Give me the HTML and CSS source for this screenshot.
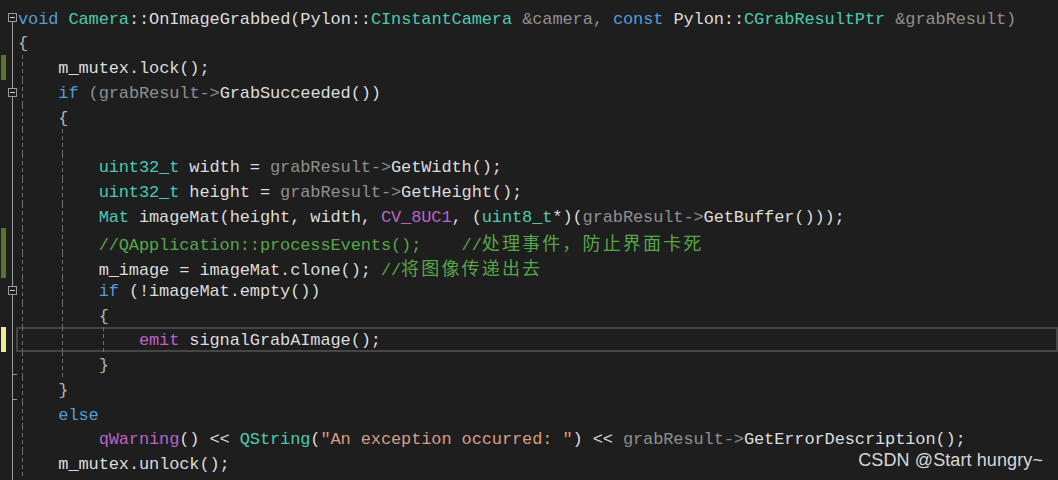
FILE: index.html
```html
<!DOCTYPE html>
<html lang="zh-CN">
<head>
    <meta charset="UTF-8">
    <meta name="viewport" content="width=device-width, initial-scale=1.0">
    <title>Camera::OnImageGrabbed</title>
    <link rel="stylesheet" href="styles.css">
</head>
<body>
    <div class="editor">
        <div class="line">
            <span class="gut"><span class="mark"></span><span class="fold top"><i class="box"></i></span></span>
            <span class="code"><span class="txt"><span class="kw">void</span> <span class="ty">Camera</span>::OnImageGrabbed(Pylon::<span class="ty">CInstantCamera</span> <span class="pa">&amp;camera,</span> <span class="kw">const</span> Pylon::<span class="ty">CGrabResultPtr</span> <span class="pa">&amp;grabResult)</span></span></span>
        </div>
        <div class="line">
            <span class="gut"><span class="mark"></span><span class="fold"></span></span>
            <span class="code"><span class="txt pu">{</span></span>
        </div>
        <div class="line">
            <span class="gut"><span class="mark add"></span><span class="fold"></span></span>
            <span class="code"><span class="ind g"></span><span class="txt">m_mutex.lock();</span></span>
        </div>
        <div class="line">
            <span class="gut"><span class="mark"></span><span class="fold"><i class="box"></i></span></span>
            <span class="code"><span class="ind g"></span><span class="txt"><span class="kw">if</span> <span class="pa">(grabResult-&gt;</span>GrabSucceeded())</span></span>
        </div>
        <div class="line">
            <span class="gut"><span class="mark"></span><span class="fold"></span></span>
            <span class="code"><span class="ind g"></span><span class="txt pu">{</span></span>
        </div>
        <div class="line">
            <span class="gut"><span class="mark"></span><span class="fold"></span></span>
            <span class="code"><span class="ind g"></span><span class="ind g"></span></span>
        </div>
        <div class="line">
            <span class="gut"><span class="mark"></span><span class="fold"></span></span>
            <span class="code"><span class="ind g"></span><span class="ind g"></span><span class="txt"><span class="ty">uint32_t</span> width = <span class="pa">grabResult-&gt;</span>GetWidth();</span></span>
        </div>
        <div class="line">
            <span class="gut"><span class="mark"></span><span class="fold"></span></span>
            <span class="code"><span class="ind g"></span><span class="ind g"></span><span class="txt"><span class="ty">uint32_t</span> height = <span class="pa">grabResult-&gt;</span>GetHeight();</span></span>
        </div>
        <div class="line">
            <span class="gut"><span class="mark"></span><span class="fold"></span></span>
            <span class="code"><span class="ind g"></span><span class="ind g"></span><span class="txt"><span class="ty">Mat</span> imageMat(height, width, <span class="mc">CV_8UC1</span>, (<span class="ty">uint8_t</span>*)(<span class="pa">grabResult-&gt;</span>GetBuffer()));</span></span>
        </div>
        <div class="line">
            <span class="gut"><span class="mark add"></span><span class="fold"></span></span>
            <span class="code"><span class="ind g"></span><span class="ind g"></span><span class="txt cm">//QApplication::processEvents();    //<span class="cjk">处理事件，防止界面卡死</span></span></span>
        </div>
        <div class="line">
            <span class="gut"><span class="mark add"></span><span class="fold"></span></span>
            <span class="code"><span class="ind g"></span><span class="ind g"></span><span class="txt">m_image = imageMat.clone(); <span class="cm">//<span class="cjk">将图像传递出去</span></span></span></span>
        </div>
        <div class="line">
            <span class="gut"><span class="mark"></span><span class="fold"><i class="box"></i></span></span>
            <span class="code"><span class="ind g"></span><span class="ind g"></span><span class="txt"><span class="kw">if</span> (!imageMat.empty())</span></span>
        </div>
        <div class="line">
            <span class="gut"><span class="mark"></span><span class="fold"></span></span>
            <span class="code"><span class="ind g"></span><span class="ind g"></span><span class="txt pu">{</span></span>
        </div>
        <div class="line">
            <span class="gut"><span class="mark edit"></span><span class="fold"></span></span>
            <span class="code cur"><span class="ind g"></span><span class="ind g"></span><span class="ind g"></span><span class="txt"><span class="mc">emit</span> signalGrabAImage();</span></span>
        </div>
        <div class="line">
            <span class="gut"><span class="mark"></span><span class="fold end"><i class="tick"></i></span></span>
            <span class="code"><span class="ind g"></span><span class="ind g"></span><span class="txt pu">}</span></span>
        </div>
        <div class="line">
            <span class="gut"><span class="mark"></span><span class="fold end"><i class="tick"></i></span></span>
            <span class="code"><span class="ind g"></span><span class="txt pu">}</span></span>
        </div>
        <div class="line">
            <span class="gut"><span class="mark"></span><span class="fold"></span></span>
            <span class="code"><span class="ind g"></span><span class="txt kw">else</span></span>
        </div>
        <div class="line">
            <span class="gut"><span class="mark"></span><span class="fold"></span></span>
            <span class="code"><span class="ind g"></span><span class="ind"></span><span class="txt"><span class="mc">qWarning</span>() &lt;&lt; <span class="ty">QString</span>(<span class="st">"An exception occurred: "</span>) &lt;&lt; <span class="pa">grabResult-&gt;</span>GetErrorDescription();</span></span>
        </div>
        <div class="line">
            <span class="gut"><span class="mark"></span><span class="fold"></span></span>
            <span class="code"><span class="ind g"></span><span class="txt">m_mutex.unlock();</span></span>
        </div>
        <div class="line">
            <span class="gut"><span class="mark"></span><span class="fold"></span></span>
            <span class="code"><span class="txt pu">}</span></span>
        </div>
    </div>

    <div class="watermark">CSDN @Start hungry~</div>
</body>
</html>
```

FILE: styles.css
```css
:root {
    --bg: #1e1e1e;
    --text: #dcdcdc;
    --keyword: #569cd6;
    --type: #4ec9b0;
    --param: #8f8f8f;
    --punct: #b4b4b4;
    --macro: #bd63c5;
    --string: #d69d85;
    --comment: #57a64a;
    --outline: #9b9b9b;
    --guide: #6e6e6e;
}

body {
    margin: 0;
    background-color: var(--bg);
    height: 480px;
    overflow: hidden;
    position: relative;
}

.editor {
    padding-top: 5.6px;
    font-family: "Liberation Mono", monospace;
    font-size: 17px;
    letter-spacing: -0.12px;
    color: var(--text);
}

.line {
    display: flex;
    height: 24.75px;
    line-height: 24.75px;
}

/* marge : marqueurs de modification + contour */
.gut {
    flex: none;
    width: 17px;
    display: flex;
}

.mark {
    width: 5px;
    margin-left: 1px;
}

.mark.add {
    background-color: #57752f;
}

.mark.edit {
    background-color: #eded8f;
}

.fold {
    width: 9px;
    margin-left: 2px;
    display: flex;
    align-items: center;
    background: linear-gradient(var(--outline), var(--outline)) no-repeat 4px 0 / 1px 100%;
}

.fold.top {
    background-position: 4px 100%;
    background-size: 1px 50%;
}

.fold.end {
    align-items: flex-end;
}

.box {
    box-sizing: border-box;
    width: 9px;
    height: 9px;
    border: 1px solid var(--outline);
    background-color: var(--bg);
    display: flex;
    align-items: center;
    justify-content: center;
}

.box::after {
    content: "";
    width: 5px;
    height: 1px;
    background-color: #d0d0d0;
}

.tick {
    width: 4px;
    height: 1px;
    margin-left: 5px;
    margin-bottom: 2px;
    background-color: var(--outline);
}

/* code */
.code {
    flex: 1;
    display: flex;
    padding-left: 1px;
    white-space: pre;
}

.code.cur {
    box-shadow: inset 0 0 0 2px #464646;
    margin-left: -1px;
    padding-left: 2px;
}

.txt {
    padding-top: 2px;
}

.ind {
    flex: none;
    width: 40.32px;
}

.ind.g {
    background: repeating-linear-gradient(to bottom, var(--guide) 0 4px, transparent 4px 7px) no-repeat 4px 0 / 1px 100%;
}

.kw { color: var(--keyword); }
.ty { color: var(--type); }
.pa { color: var(--param); }
.pu { color: var(--punct); }
.mc { color: var(--macro); }
.st { color: var(--string); }
.cm { color: var(--comment); }

.cjk {
    font-family: "Noto Sans CJK SC", sans-serif;
    font-size: 18px;
    letter-spacing: 2.16px;
}

.watermark {
    position: absolute;
    right: 15px;
    top: 450px;
    font-family: "Liberation Sans", Arial, sans-serif;
    font-size: 18px;
    letter-spacing: 0.1px;
    line-height: 20px;
    color: #d8d8d8;
}
```
